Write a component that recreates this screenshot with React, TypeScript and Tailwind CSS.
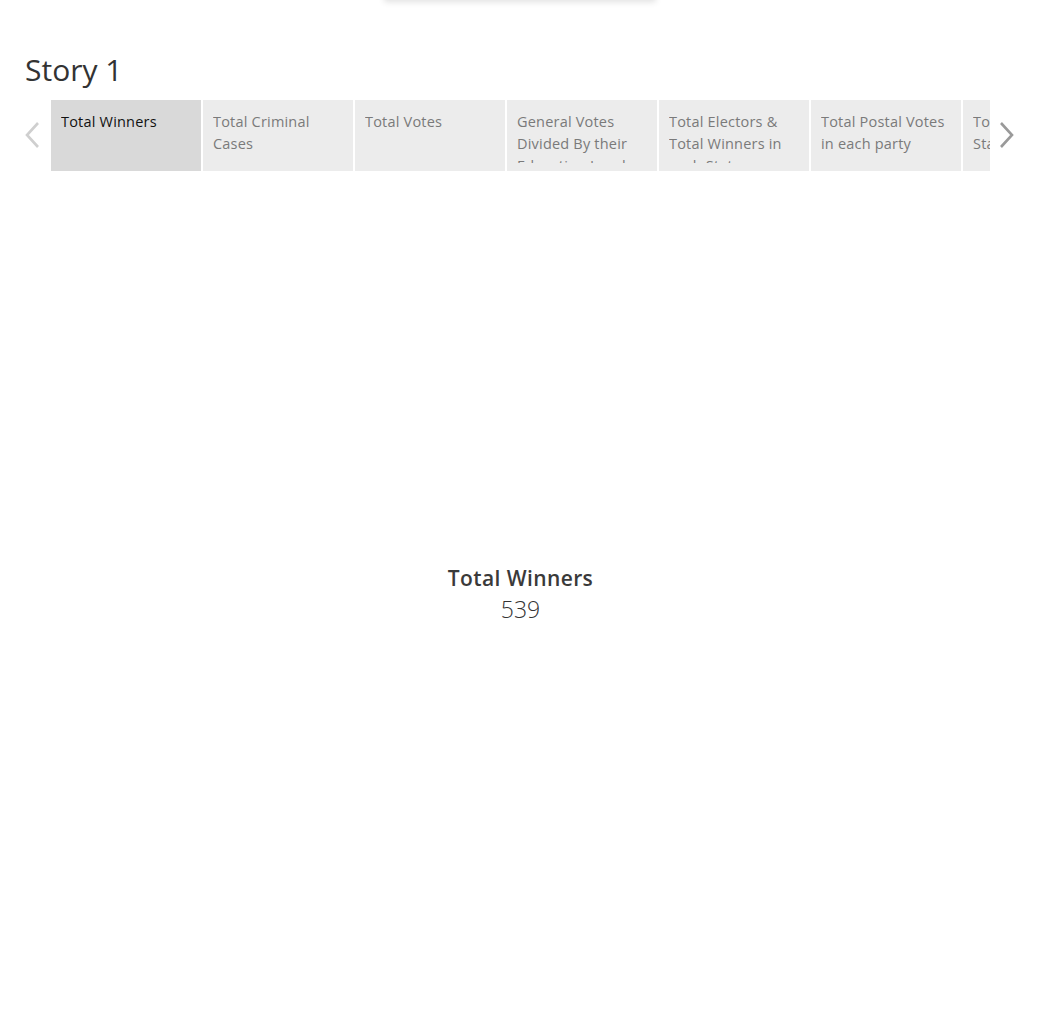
import React from "react";

const tabs = [
  "Total Winners",
  "Total Criminal Cases",
  "Total Votes",
  "General Votes Divided By their Education Level",
  "Total Electors & Total Winners in each State",
  "Total Postal Votes in each party",
  "Total Seats in each State",
];

export default function App() {
  return (
    <div className="relative w-[1057px] h-[1035px] bg-white overflow-hidden" style={{ fontFamily: '"Open Sans", "Noto Sans", sans-serif' }}>
      <div className="absolute left-[384px] top-[-10px] w-[272px] h-[10px] bg-white shadow-[0_2px_6px_rgba(0,0,0,0.12)]" />
      <div className="pt-[50px] pl-[25px]">
        <h1 className="text-[30px] leading-[40px] font-normal text-[#333]">Story 1</h1>
      </div>
      <div className="mt-[10px] flex items-start h-[71px]">
        <div className="w-[51px] flex justify-start pl-[23px] pt-[20px]">
          <svg width="18" height="30" viewBox="0 0 18 30">
            <path d="M15 3 L4 15 L15 27" fill="none" stroke="#cfcfcf" strokeWidth="2.6" />
          </svg>
        </div>
        <div className="flex w-[939px] gap-[2px] overflow-hidden h-[71px]">
          {tabs.map((t, i) => (
            <div
              key={t}
              className={`shrink-0 w-[150px] h-[71px] px-[10px] pt-[11px] ${i === 0 ? "bg-[#d9d9d9] text-[#111]" : "bg-[#ececec] text-[#7a7a7a]"}`}
            >
              <div className="h-[52px] overflow-hidden text-[14.5px] leading-[22px] tracking-[0.2px]">{t}</div>
            </div>
          ))}
        </div>
        <div className="w-[40px] flex justify-start pl-[8px] pt-[20px]">
          <svg width="18" height="30" viewBox="0 0 18 30">
            <path d="M3 3 L14 15 L3 27" fill="none" stroke="#9a9a9a" strokeWidth="2.6" />
          </svg>
        </div>
      </div>
      <div className="flex flex-col items-center mt-[394px] pr-[16px]">
        <div className="text-[21px] leading-[26px] font-semibold tracking-[0.4px] text-[#3a3a3a]">Total Winners</div>
        <div className="text-[23px] leading-[36px] font-light text-[#333]">539</div>
      </div>
    </div>
  );
}
